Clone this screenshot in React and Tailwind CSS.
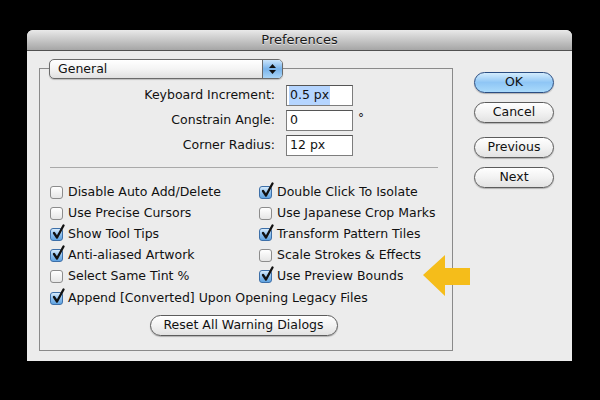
const font = { fontFamily: '"DejaVu Sans", "Lucida Grande", sans-serif' };

const leftChecks = [
  ['Disable Auto Add/Delete', false],
  ['Use Precise Cursors', false],
  ['Show Tool Tips', true],
  ['Anti-aliased Artwork', true],
  ['Select Same Tint %', false],
];

const rightChecks = [
  ['Double Click To Isolate', true],
  ['Use Japanese Crop Marks', false],
  ['Transform Pattern Tiles', true],
  ['Scale Strokes & Effects', false],
  ['Use Preview Bounds', true],
];

function Checkbox({ checked }) {
  return (
    <span
      className={
        'relative inline-block w-[13px] h-[13px] rounded-[3px] border shrink-0 ' +
        (checked
          ? 'border-[#3d6fa8] bg-gradient-to-b from-[#d6ebfc] via-[#8ec0ee] to-[#5fa2e0]'
          : 'border-[#8c8c8c] bg-gradient-to-b from-white to-[#e6e6e6]')
      }
    >
      {checked && (
        <svg className="absolute left-[1px] -top-[5px]" width="13" height="16" viewBox="0 0 13 16">
          <path d="M2 9 L5 13.5 L11.5 1.5" fill="none" stroke="#111" strokeWidth="2.3" strokeLinecap="round" strokeLinejoin="round" />
        </svg>
      )}
    </span>
  );
}

function CheckRow({ label, checked }) {
  return (
    <div className="flex items-center gap-[5px] h-[21px] text-[12.5px] text-[#111] whitespace-nowrap">
      <Checkbox checked={checked} />
      <span>{label}</span>
    </div>
  );
}

function Field({ label, value, selected, unit }) {
  return (
    <div className="flex items-center h-[21px] mb-[4px]">
      <span className="w-[246px] text-right pr-[11px] text-[12.5px] text-[#111]">{label}</span>
      <div className="w-[67px] h-[21px] bg-white border border-[#7d7d7d] border-t-[#555] flex items-center pl-[2px] text-[12.5px] text-[#111]">
        <span className={selected ? 'bg-[#b5d5ff] px-[1px]' : 'px-[1px]'}>{value}</span>
      </div>
      {unit && <span className="ml-[5px] -mt-[6px] text-[12px] text-[#111]">{unit}</span>}
    </div>
  );
}

function PillButton({ children, primary, className = '' }) {
  return (
    <div
      className={
        'flex items-center justify-center h-[21px] rounded-full border text-[12.5px] text-[#111] shadow-[0_1px_1px_rgba(0,0,0,0.25)] ' +
        (primary
          ? 'border-[#2a4d82] bg-gradient-to-b from-[#d3ecfd] via-[#8fc6f5] to-[#a9dafb]'
          : 'border-[#5c5c5c] bg-gradient-to-b from-white via-[#f2f2f2] to-[#e2e2e2]') +
        ' ' +
        className
      }
    >
      {children}
    </div>
  );
}

export default function App() {
  return (
    <div className="relative w-[600px] h-[400px] bg-black overflow-hidden pt-[30px] pl-[27px]" style={font}>
      <div className="w-[545px] h-[331px] rounded-t-[6px] overflow-hidden bg-[#ececec] flex flex-col">
        {/* Title bar */}
        <div className="h-[21px] shrink-0 flex items-center justify-center bg-gradient-to-b from-[#e9e9e9] to-[#a6a6a6] border-b border-[#515151] text-[13px] text-[#1a1a1a] [text-shadow:0_1px_0_rgba(255,255,255,0.6)]">
          Preferences
        </div>

        <div className="flex flex-1">
          {/* Group box */}
          <div className="ml-[12px] mt-[17px] w-[414px] h-[283px] border border-[#8a8a8a] flex flex-col">
            {/* Popup */}
            <div className="-mt-[10px] ml-[9px] w-[234px] h-[20px] flex rounded-[5px] border border-[#6a6a6a] bg-gradient-to-b from-white via-[#f4f4f4] to-[#e0e0e0] shadow-[0_1px_1px_rgba(0,0,0,0.2)] overflow-hidden">
              <span className="flex-1 pl-[8px] text-[12.5px] text-[#111] leading-[18px]">General</span>
              <span className="w-[20px] border-l border-[#6a6a6a] bg-gradient-to-b from-[#cbe5fb] via-[#78b3ea] to-[#a9d5f8] flex flex-col items-center justify-center gap-[2px]">
                <svg width="7" height="4" viewBox="0 0 7 4"><path d="M0 4 L3.5 0 L7 4 Z" fill="#111" /></svg>
                <svg width="7" height="4" viewBox="0 0 7 4"><path d="M0 0 L3.5 4 L7 0 Z" fill="#111" /></svg>
              </span>
            </div>

            {/* Fields */}
            <div className="mt-[6px]">
              <Field label="Keyboard Increment:" value="0.5 px" selected />
              <Field label="Constrain Angle:" value="0" unit="°" />
              <Field label="Corner Radius:" value="12 px" />
            </div>

            {/* Separator */}
            <div className="ml-[10px] mt-[7px] w-[388px] border-t border-[#a9a9a9]" />

            {/* Checkboxes */}
            <div className="mt-[14px] ml-[10px] grid grid-cols-[209px_1fr]">
              <div className="flex flex-col">
                {leftChecks.map(([l, c]) => (
                  <CheckRow key={l} label={l} checked={c} />
                ))}
              </div>
              <div className="flex flex-col">
                {rightChecks.map(([l, c]) => (
                  <CheckRow key={l} label={l} checked={c} />
                ))}
              </div>
            </div>
            <div className="ml-[10px] mt-[1px]">
              <CheckRow label="Append [Converted] Upon Opening Legacy Files" checked />
            </div>

            <div className="flex justify-center mt-[6px] pr-[5px]">
              <PillButton className="w-[188px]">Reset All Warning Dialogs</PillButton>
            </div>
          </div>

          {/* Buttons */}
          <div className="ml-[21px] mt-[21px] flex flex-col w-[80px]">
            <PillButton primary>OK</PillButton>
            <PillButton className="mt-[9px]">Cancel</PillButton>
            <PillButton className="mt-[14px]">Previous</PillButton>
            <PillButton className="mt-[9px]">Next</PillButton>
          </div>
        </div>
      </div>

      {/* Yellow arrow annotation */}
      <svg className="absolute left-[422px] top-[254px]" width="50" height="44" viewBox="0 0 50 44">
        <path d="M1 21 L23 1 L23 14 L48 14 L48 31 L23 31 L23 42 Z" fill="#f5bd1a" />
      </svg>
    </div>
  );
}
